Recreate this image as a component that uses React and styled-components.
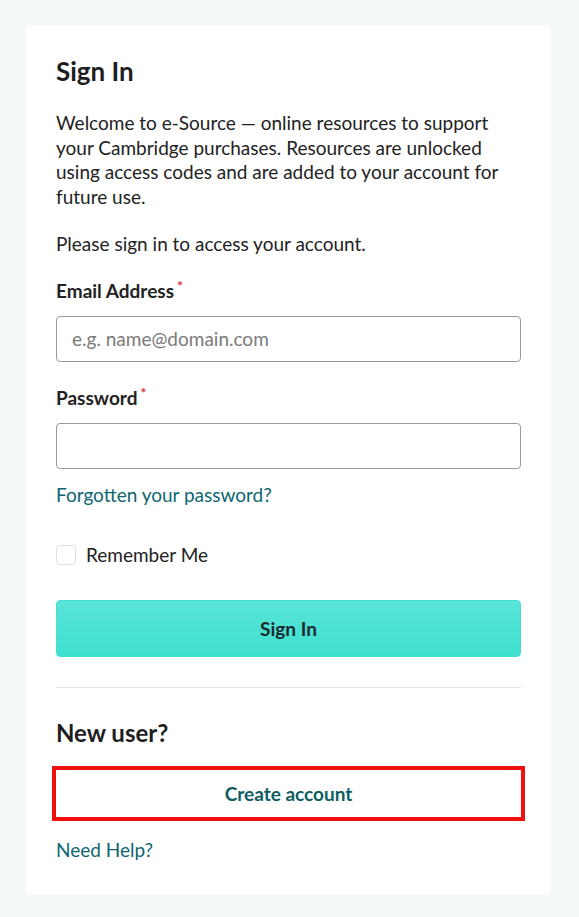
import React, { useState } from "react";
import styled, { createGlobalStyle } from "styled-components";

const GlobalStyle = createGlobalStyle`
  * { box-sizing: border-box; }
  body {
    margin: 0;
    background: #f5f8f9;
    font-family: Lato, "Open Sans", Arial, sans-serif;
    color: #222222;
  }
`;

export default function App() {
  const [remember, setRemember] = useState(false);

  return (
    <>
      <GlobalStyle />
      <Page>
        <Card>
          <Title>Sign In</Title>
          <Text>
            Welcome to e-Source — online resources to support your Cambridge purchases. Resources
            are unlocked using access codes and are added to your account for future use.
          </Text>
          <Text $top={23}>Please sign in to access your account.</Text>

          <Label htmlFor="email" $top={22}>
            Email Address<Required>*</Required>
          </Label>
          <Input id="email" type="email" placeholder="e.g. name@domain.com" />

          <Label htmlFor="password" $top={24}>
            Password<Required>*</Required>
          </Label>
          <Input id="password" type="password" />

          <TextLink href="#" $top={14}>
            Forgotten your password?
          </TextLink>

          <CheckRow>
            <Checkbox
              type="checkbox"
              checked={remember}
              onChange={(e) => setRemember(e.target.checked)}
            />
            Remember Me
          </CheckRow>

          <PrimaryButton type="button">Sign In</PrimaryButton>

          <Divider />

          <SubTitle>New user?</SubTitle>
          <SecondaryButton type="button">Create account</SecondaryButton>

          <TextLink href="#" $top={17}>
            Need Help?
          </TextLink>
        </Card>
      </Page>
    </>
  );
}

const Page = styled.div`
  min-height: 100vh;
  padding: 25px 28px 23px 26px;
`;

const Card = styled.div`
  display: flex;
  flex-direction: column;
  background: #ffffff;
  border-radius: 5px;
  padding: 31px 30px 33px;
`;

const Title = styled.h1`
  margin: 0;
  font-size: 26px;
  line-height: 31px;
  font-weight: 700;
  color: #1e1e1e;
`;

const Text = styled.p`
  margin: ${(p) => p.$top ?? 24}px 0 0;
  font-size: 19px;
  line-height: 24.5px;
  color: #222222;
`;

const Label = styled.label`
  margin-top: ${(p) => p.$top}px;
  font-size: 19px;
  line-height: 24px;
  font-weight: 700;
  color: #222222;
`;

const Required = styled.span`
  position: relative;
  top: -7px;
  margin-left: 3px;
  font-size: 14px;
  line-height: 0;
  color: #d62b38;
`;

const Input = styled.input`
  margin-top: 13px;
  height: 46px;
  width: 100%;
  padding: 0 15px;
  border: 1px solid #9a9a9a;
  border-radius: 4px;
  font-family: inherit;
  font-size: 19px;
  color: #222222;
  outline: none;

  &::placeholder {
    color: #7a7a7a;
  }
`;

const TextLink = styled.a`
  align-self: flex-start;
  margin-top: ${(p) => p.$top}px;
  font-size: 19px;
  line-height: 24px;
  color: #0d6670;
  text-decoration: none;
`;

const CheckRow = styled.label`
  display: flex;
  align-items: center;
  gap: 10px;
  margin-top: 36px;
  font-size: 19px;
  line-height: 24px;
  color: #222222;
`;

const Checkbox = styled.input`
  appearance: none;
  margin: 0;
  width: 20px;
  height: 20px;
  border: 1px solid #dcdfe5;
  border-radius: 4px;
  background: #ffffff;

  &:checked {
    background: #0d6670;
    border-color: #0d6670;
  }
`;

const PrimaryButton = styled.button`
  margin-top: 33px;
  height: 57px;
  width: 100%;
  border: 1px solid #45e0d1;
  border-radius: 4px;
  background: linear-gradient(180deg, #5ae5d7 0%, #3ddfcf 100%);
  font-family: inherit;
  font-size: 19px;
  font-weight: 700;
  color: #1c2b30;
  cursor: pointer;
`;

const Divider = styled.hr`
  margin: 30px 0 0;
  border: 0;
  border-top: 1px solid #e2e2e2;
`;

const SubTitle = styled.h2`
  margin: 31px 0 0;
  font-size: 24px;
  line-height: 28px;
  font-weight: 700;
  color: #1e1e1e;
`;

const SecondaryButton = styled.button`
  margin: 19px -4px 0;
  height: 55px;
  border: 4px solid #f20f0f;
  background: #ffffff;
  font-family: inherit;
  font-size: 19px;
  font-weight: 700;
  color: #0d5c64;
  cursor: pointer;
`;
